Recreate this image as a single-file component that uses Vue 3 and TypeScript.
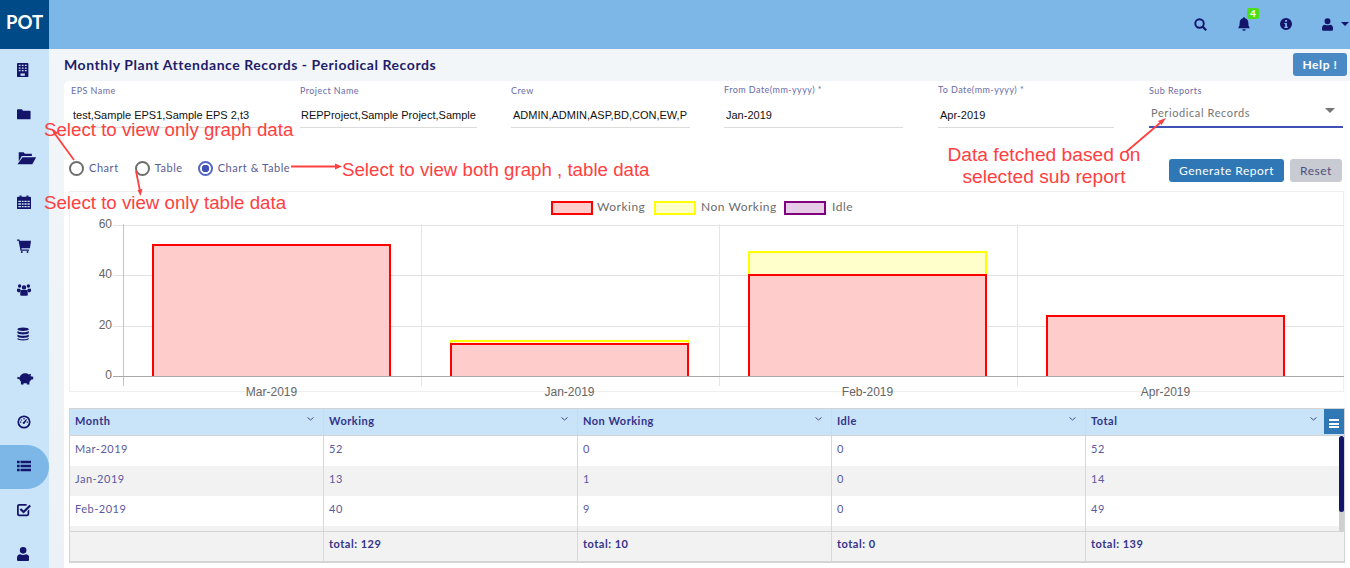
<script setup lang="ts">
interface Row { month: string; working: number; nonWorking: number; idle: number; total: number }

const rows: Row[] = [
  { month: 'Mar-2019', working: 52, nonWorking: 0, idle: 0, total: 52 },
  { month: 'Jan-2019', working: 13, nonWorking: 1, idle: 0, total: 14 },
  { month: 'Feb-2019', working: 40, nonWorking: 9, idle: 0, total: 49 },
]
const chartMonths = [
  { month: 'Mar-2019', working: 52, nonWorking: 0 },
  { month: 'Jan-2019', working: 13, nonWorking: 1 },
  { month: 'Feb-2019', working: 40, nonWorking: 9 },
  { month: 'Apr-2019', working: 24, nonWorking: 0 },
]
const base = 185
const y = (v: number) => Math.ceil(base - v * 2.533)
const ticks = [60, 40, 20, 0]
const verticals = [54, 352, 650, 948]
const barX = (i: number) => 84 + 298 * i
const barPath = (i: number, top: number, bottom: number) => {
  const l = barX(i)
  return `M${l} ${bottom}V${top}H${l + 237}V${bottom}`
}
const columns = ['Month', 'Working', 'Non Working', 'Idle', 'Total']
const totals = ['', 'total: 129', 'total: 10', 'total: 0', 'total: 139']

const fields = [
  { label: 'EPS Name', value: 'test,Sample EPS1,Sample EPS 2,t3', cls: 'f-eps' },
  { label: 'Project Name', value: 'REPProject,Sample Project,Sample', cls: 'f-project' },
  { label: 'Crew', value: 'ADMIN,ADMIN,ASP,BD,CON,EW,P', cls: 'f-crew' },
  { label: 'From Date(mm-yyyy) *', value: 'Jan-2019', cls: 'f-from raised' },
  { label: 'To Date(mm-yyyy) *', value: 'Apr-2019', cls: 'f-to raised' },
]

const navIcons: { d: string; w: number }[] = [
  { w: 14, d: 'M1 0h11a1 1 0 0 1 1 1v14a1 1 0 0 1-1 1H1a1 1 0 0 1-1-1V1a1 1 0 0 1 1-1zM2 2v1.500h2V2zM5.500 2v1.500h2V2zM9 2v1.500h2V2zM2 5v1.500h2V5zM5.500 5v1.500h2V5zM9 5v1.500h2V5zM2 8v1.500h2V8zM5.500 8v1.500h2V8zM9 8v1.500h2V8zM4 12v2.500h5V12z' },
  { w: 16, d: 'M0 3.500a1 1 0 0 1 1-1h4.500l1.500 1.800h7.500a1 1 0 0 1 1 1V13a1 1 0 0 1-1 1H1a1 1 0 0 1-1-1z' },
  { w: 22, d: 'M2 1.500h5.500L9 3h8v2.800H5.500L2 12zM6.300 7H22l-4.500 8H.5z' },
  { w: 16, d: 'M1 2h2V.5h2.200V2h5.600V.5H13V2h2a1 1 0 0 1 1 1v12a1 1 0 0 1-1 1H1a1 1 0 0 1-1-1V3a1 1 0 0 1 1-1zM1.500 6.500V8h3V6.500zM5.500 6.500V8h2V6.500zM8.500 6.500V8h2.500V6.500zM12 6.500V8h2.500V6.500zM1.500 9.500V11h3V9.500zM5.500 9.500V11h2V9.500zM8.500 9.500V11h2.500V9.500zM12 9.500V11h2.500V9.500zM1.500 12.500V14h3v-1.500zM5.500 12.500V14h2v-1.500zM8.500 12.500V14h2.500v-1.500zM12 12.500V14h2.500v-1.500z' },
  { w: 16, d: 'M0 .500h2.800L3.200 2H16l-1.200 8.500H5l.3 1.500h8.500v1.500H4L1.800 2H0zM5.500 13.800a1.100 1.100 0 1 1 0 2.200 1.100 1.100 0 0 1 0-2.200zM12 13.800a1.100 1.100 0 1 1 0 2.200 1.100 1.100 0 0 1 0-2.200z' },
  { w: 16, d: 'M3 1.500a2 2 0 1 1 0 4 2 2 0 0 1 0-4zM13 1.500a2 2 0 1 1 0 4 2 2 0 0 1 0-4zM8 2.500a2.500 2.500 0 1 1 0 5 2.500 2.500 0 0 1 0-5zM0 6.500h3.800l.4 4H1.200L0 9.500zM16 6.500h-3.800l-.4 4h3L16 9.500zM5.200 8h5.600A1.500 1.500 0 0 1 12.300 9.500v4a1 1 0 0 1-1 1H4.700a1 1 0 0 1-1-1v-4A1.500 1.500 0 0 1 5.200 8z' },
  { w: 14, d: 'M7 .500c3.500 0 6.500.9 6.500 2S10.500 4.500 7 4.500.5 3.600.5 2.500 3.500.5 7 .5zM.5 4.500c1 1 4 1.500 6.500 1.500s5.500-.5 6.500-1.500v2C13.500 7.600 10.500 8.500 7 8.500S.5 7.600.5 6.500zM.5 8.500c1 1 4 1.500 6.500 1.500s5.500-.5 6.500-1.500v2c0 1.100-3 2-6.500 2s-6.500-.9-6.500-2zM.5 12.500c1 1 4 1.500 6.500 1.500s5.500-.5 6.500-1.500v1c0 1.100-3 2-6.500 2s-6.500-.9-6.500-2z' },
  { w: 19, d: 'M9 2.500c2 0 3.500.6 4.500 1.500L16 3l-.5 3 3 .5v3l-2.500.5c-.4 1-1 1.700-1.800 2.300V15.500h-3V14H7.500v1.500h-3v-3.500C3.500 11.400 3 10.500 2.800 9.500L0 8.500l.8-2 2.200.8C3.700 4.500 6 2.500 9 2.500z' },
  { w: 16, d: 'M8 .5a7.500 7.500 0 1 1 0 15A7.500 7.500 0 0 1 8 .5zm0 2a5.500 5.500 0 1 0 0 11A5.500 5.500 0 0 0 8 2.500zM7.300 3.500h1.400V5H7.300zM3.500 7.500H5v1.300H3.500zM11 7.500h1.500v1.300H11zM10.500 4.700l.9.800-2.300 3.500a1.300 1.300 0 1 1-1.500-1.300zM4.800 4.800l1.200 1-.9.900-1.100-1z' },
  { w: 16, d: 'M0 2h3v2.800H0zM4 2h12v2.800H4zM0 6.600h3v2.800H0zM4 6.600h12v2.800H4zM0 11.200h3V14H0zM4 11.200h12V14H4z' },
  { w: 16, d: 'M2.500 1H11v2H2.700c-.5 0-.7.300-.7.700v8.600c0 .4.200.7.700.7h8.600c.4 0 .7-.3.700-.7V9l2-2v5.500c0 1.400-1.100 2.500-2.500 2.500h-9A2.500 2.500 0 0 1 0 12.500v-9A2.500 2.500 0 0 1 2.500 1zM14.200 2l1.800 1.700L7.500 12 3 7.600l1.800-1.700 2.700 2.600z' },
  { w: 14, d: 'M7 0a3.800 3.800 0 1 1 0 7.600A3.800 3.800 0 0 1 7 0zM3.800 8.200c.9.500 2 .8 3.200.8s2.300-.3 3.200-.8C12.500 8.300 14 10 14 12.300V14.500a1.500 1.500 0 0 1-1.500 1.500h-11A1.500 1.500 0 0 1 0 14.500v-2.200C0 10 1.500 8.300 3.800 8.200z' },
]
</script>

<template>
  <div class="app">
    <header class="topbar">
      <div class="logo">POT</div>
      <div class="top-icons">
        <svg class="ti i-search" width="13" height="13" viewBox="0 0 16 16"><circle cx="6.800" cy="6.800" r="5.200" fill="none" stroke="#14146b" stroke-width="2.400" /><path d="M10.500 10.500 15 15" stroke="#14146b" stroke-width="2.800" /></svg>
        <span class="bell">
          <svg width="12" height="14" viewBox="0 0 14 16"><path fill="#14146b" d="M7 0a1.200 1.200 0 0 1 1.200 1.300C10.500 1.800 12 3.700 12 6c0 4 .8 5.500 2 7H0c1.200-1.500 2-3 2-7 0-2.300 1.500-4.200 3.800-4.700A1.200 1.200 0 0 1 7 0zM5 14h4a2 2 0 0 1-4 0z" /></svg>
          <span class="badge">4</span>
        </span>
        <svg class="ti i-info" width="12" height="12" viewBox="0 0 16 16"><path fill="#14146b" fill-rule="evenodd" d="M8 0a8 8 0 1 1 0 16A8 8 0 0 1 8 0zM6.800 2.500v2.600h2.600V2.500zM5.800 6.500v1.600h1.100v3.400H5.800v1.700h4.600v-1.700H9.300V6.500z" /></svg>
        <span class="usr">
          <svg width="11" height="13" viewBox="0 0 14 16"><path fill="#14146b" d="M7 0a3.800 3.800 0 1 1 0 7.600A3.800 3.800 0 0 1 7 0zM3.800 8.200c.9.500 2 .8 3.200.8s2.300-.3 3.200-.8C12.500 8.300 14 10 14 12.300V14.500a1.500 1.500 0 0 1-1.500 1.500h-11A1.500 1.500 0 0 1 0 14.500v-2.200C0 10 1.500 8.300 3.800 8.200z" /></svg>
          <i class="caret"></i>
        </span>
      </div>
    </header>

    <div class="body">
      <nav class="sidebar">
        <div v-for="(ic, i) in navIcons" :key="i" class="nav-item" :class="{ active: i === 9 }">
          <svg :width="ic.w * 0.875" height="14" :viewBox="`0 0 ${ic.w} 16`"><path fill="#14146b" fill-rule="evenodd" :d="ic.d" /></svg>
        </div>
      </nav>

      <main class="content">
        <div class="title-row">
          <h1>Monthly Plant Attendance Records - Periodical Records</h1>
          <button class="help">Help !</button>
        </div>

        <section class="panel">
          <div class="fields">
            <div v-for="f in fields" :key="f.label" class="field" :class="f.cls">
              <label>{{ f.label }}</label>
              <div class="value">{{ f.value }}</div>
            </div>
            <div class="field f-sub">
              <label>Sub Reports</label>
              <div class="select">Periodical Records<i class="sel-caret"></i></div>
            </div>
          </div>

          <div class="controls">
            <div class="radios">
              <span class="radio"><i class="dot"></i>Chart</span>
              <span class="radio r-table"><i class="dot"></i>Table</span>
              <span class="radio on"><i class="dot"></i>Chart &amp; Table</span>
            </div>
            <div class="buttons">
              <button class="generate">Generate Report</button>
              <button class="reset">Reset</button>
            </div>
          </div>

          <div class="chart">
            <svg width="1275" height="210" viewBox="0 0 1275 210">
              <g class="legend">
                <rect x="483" y="11" width="40" height="12" fill="#ffcccc" stroke="#ff0000" stroke-width="2" />
                <text x="528" y="20">Working</text>
                <rect x="586" y="11" width="40" height="12" fill="#ffffcc" stroke="#ffff00" stroke-width="2" />
                <text x="632" y="20">Non Working</text>
                <rect x="716" y="11" width="40" height="12" fill="#e6cce6" stroke="#800080" stroke-width="2" />
                <text x="763" y="20">Idle</text>
              </g>
              <g v-for="t in ticks" :key="t">
                <line x1="44" x2="1275" :y1="y(t) + 0.5" :y2="y(t) + 0.5" stroke="#e2e2e2" />
                <text class="axis" x="43" :y="y(t) + 3" text-anchor="end">{{ t }}</text>
              </g>
              <line v-for="v in verticals" :key="v" :x1="v + 0.5" :x2="v + 0.5" y1="33" y2="195" stroke="#e6e6e6" />
              <line x1="54.500" x2="54.500" y1="33" y2="195" stroke="#c4c4c4" />
              <g v-for="(m, i) in chartMonths" :key="m.month">
                <g v-if="m.nonWorking">
                  <rect :x="barX(i)" :y="y(m.working + m.nonWorking)" width="237" :height="y(m.working) - y(m.working + m.nonWorking)" fill="#ffffcc" />
                  <path :d="barPath(i, y(m.working + m.nonWorking), y(m.working))" fill="none" stroke="#ffff00" stroke-width="2" />
                </g>
                <rect :x="barX(i)" :y="y(m.working)" width="237" :height="base - y(m.working)" fill="#ffcccc" />
                <path :d="barPath(i, y(m.working), base)" fill="none" stroke="#ff0000" stroke-width="2" />
                <text class="axis" :x="barX(i) + 118.500" y="205" text-anchor="middle">{{ m.month }}</text>
              </g>
              <line x1="44" x2="1275" :y1="base + 0.5" :y2="base + 0.5" stroke="#a8a8a8" />
            </svg>
          </div>

          <div class="grid-table">
            <div class="tr head">
              <div v-for="c in columns" :key="c" class="td">{{ c }}<svg class="chev" width="7" height="4" viewBox="0 0 7 4"><path d="M.5.500l3 2.500 3-2.500" fill="none" stroke="#4a4a8c" /></svg></div>
              <button class="menu" aria-label="Columns"><i></i><i></i><i></i></button>
            </div>
            <div class="tbody">
              <div v-for="r in rows" :key="r.month" class="tr">
                <div class="td">{{ r.month }}</div>
                <div class="td">{{ r.working }}</div>
                <div class="td">{{ r.nonWorking }}</div>
                <div class="td">{{ r.idle }}</div>
                <div class="td">{{ r.total }}</div>
              </div>
              <div class="tr stub"><div class="td"></div><div class="td"></div><div class="td"></div><div class="td"></div><div class="td"></div></div>
              <div class="scroll"><span></span></div>
            </div>
            <div class="tr foot">
              <div v-for="(t, i) in totals" :key="i" class="td">{{ t }}</div>
            </div>
          </div>
        </section>
      </main>
    </div>

    <div class="notes">
      <span class="note n1">Select to view only graph data</span>
      <span class="note n2">Select to view only table data</span>
      <span class="note n3">Select to view both graph , table data</span>
      <span class="note n4">Data fetched based on<br />selected sub report</span>
      <svg class="arrows" width="1350" height="568" viewBox="0 0 1350 568">
        <g stroke="#ff4040" stroke-width="1.800" fill="none">
          <path d="M74 160 55 134" />
          <path d="M136 171 140 191" />
          <path d="M291 166.500H335" />
          <path d="M1126 152 1160 123" />
        </g>
        <g fill="#ff4040">
          <path d="M52 130l6.500 2.500-4 3z" />
          <path d="M140.500 196l-3-6 5-1z" />
          <path d="M342 166.500l-7-3v6z" />
          <path d="M1166 118l-8 3 3.500 4z" />
        </g>
      </svg>
    </div>
  </div>
</template>

<style>
html, body { margin: 0; overflow: hidden; }
</style>

<style scoped>
.app { position: relative; width: 1350px; height: 568px; overflow: hidden; font-family: Lato, "Liberation Sans", sans-serif; color: #14146b; }
.topbar { display: flex; height: 49px; background: #7cb7e8; }
.logo { width: 49px; background: #004a87; color: #fff; font-size: 18.500px; font-weight: 700; line-height: 45px; text-align: center; }
.top-icons { flex: 1; display: flex; align-items: center; justify-content: flex-end; height: 48px; }
.ti { display: block; }
.i-search { margin-right: 31px; }
.bell { margin-right: 30px; }
.i-info { margin-right: 30px; }
.bell { position: relative; display: block; height: 14px; }
.bell svg, .usr svg { display: block; }
.badge { position: absolute; left: 9px; top: -9px; width: 12px; height: 11px; border-radius: 2px; background: #4bdf1a; color: #fff; font-size: 10px; font-weight: 700; line-height: 11px; text-align: center; }
.usr { display: flex; align-items: center; gap: 8px; margin-right: 1px; }
.caret { width: 0; height: 0; border-left: 4px solid transparent; border-right: 4px solid transparent; border-top: 4px solid #14146b; }
.body { display: flex; height: 519px; }
.sidebar { width: 49px; flex: none; background: #c9e4f9; }
.nav-item { height: 44px; display: flex; align-items: center; padding: 0 0 3px 17px; box-sizing: border-box; }
.nav-item svg { display: block; }
.nav-item.active { background: #7cb7e8; border-radius: 0 22px 22px 0; }
.content { flex: 1; min-width: 0; padding-left: 15px; background: linear-gradient(#f3f6f9, #ebf1f6); }
.title-row { height: 32px; display: flex; align-items: center; justify-content: space-between; padding: 0 3px 0 0; }
h1 { margin: -2px 0 0; font-size: 14px; font-weight: 700; letter-spacing: .55px; color: #1d1d6b; }
.help { width: 54px; height: 23px; padding: 0; margin-top: -1px; border: 0; border-radius: 3px; background: #4a8ac4; color: #fff; font: 700 12px Lato, sans-serif; letter-spacing: .6px; }
.panel { height: 487px; background: #fff; border-top-left-radius: 5px; padding-left: 5px; box-sizing: border-box; }
.fields { display: flex; height: 47px; }
.field { flex: none; box-sizing: border-box; }
.field label { display: block; padding-top: 4px; height: 19px; box-sizing: border-box; font-size: 9px; letter-spacing: .45px; color: #6b6ba8; }
.field.raised label { padding-top: 3px; }
.value { height: 23px; margin-top: 5px; padding: 3px 0 0 2px; box-sizing: border-box; border-bottom: 1px solid #dcdcdc; font: 11px/14px "Liberation Sans", sans-serif; color: #111; white-space: nowrap; overflow: hidden; }
.f-eps { width: 207px; margin-left: 2px; margin-right: 22px; }
.f-project { width: 177px; margin-right: 34px; }
.f-project .value { padding-left: 1px; }
.f-crew { width: 179px; margin-right: 34px; }
.f-from { width: 179px; margin-right: 35px; }
.f-to { width: 176px; margin-right: 35px; }
.f-sub { width: 194px; }
.select { position: relative; height: 23px; margin-top: 5px; padding: 1px 0 0 2px; box-sizing: border-box; border-bottom: 2px solid #3f51b5; font-size: 11px; line-height: 14px; letter-spacing: .6px; color: #757575; }
.sel-caret { position: absolute; right: 8px; top: 3px; border-left: 5px solid transparent; border-right: 5px solid transparent; border-top: 5px solid #757575; }
.controls { height: 63px; display: flex; justify-content: space-between; padding: 31px 8px 0 0; box-sizing: border-box; }
.radios { display: flex; align-items: flex-start; margin-top: -2px; }
.radio { display: flex; align-items: center; height: 20px; font-size: 11px; letter-spacing: .55px; color: #565c96; margin-right: 16px; }
.r-table { margin-right: 15px; }
.dot { width: 15px; height: 15px; box-sizing: border-box; margin-right: 5px; border: 2px solid #6e6e6e; border-radius: 50%; background: #fff; }
.radio .dot { margin-top: 2px; }
.on .dot { border-color: #5566c6; background: radial-gradient(circle, #3f51b5 0 3.500px, #fff 4px); }
.buttons { display: flex; gap: 6px; }
.buttons button { height: 23px; padding: 0; border: 0; border-radius: 3px; font: 12px Lato, sans-serif; letter-spacing: .5px; }
.generate { width: 115px; background: #2f78b5; color: #fff; font-weight: 500; }
.reset { width: 52px; background: #c8cbd1; color: #50507e; }
.chart { width: 1275px; height: 201px; box-sizing: border-box; border: 1px solid #efefef; border-bottom-width: 1px; }
.chart svg { display: block; margin: -1px; }
.legend text { font: 12px Lato, "Liberation Sans", sans-serif; letter-spacing: .5px; fill: #6b6b6b; }
.axis { font: 12px "Liberation Sans", sans-serif; fill: #666; }
.grid-table { width: 1276px; margin-top: 16px; box-sizing: border-box; border: 1px solid #d4d4d4; border-bottom-width: 2px; font-size: 11px; letter-spacing: .5px; color: #5a5aa0; }
.tr { display: grid; grid-template-columns: 254px 254px 254px 254px 1fr; }
.td { position: relative; box-sizing: border-box; padding-left: 5px; border-right: 1px solid #d8d8d8; }
.td:last-child { border-right: 0; }
.head { position: relative; height: 26px; background: #c9e4f9; border-bottom: 1px solid #d4d4d4; font-weight: 700; color: #33338a; }
.head .td { line-height: 23px; }
.chev { position: absolute; right: 9px; top: 8px; }
.head .td:nth-child(5) .chev { right: 26px; }
.menu { position: absolute; right: 0; top: 0; width: 20px; height: 25px; padding: 6px 0 0; border: 0; background: #2f78b5; }
.menu i { display: block; width: 10px; height: 2px; margin: 0 auto 1.500px; background: #fff; }
.tbody { position: relative; }
.tbody .tr { height: 30px; }
.tbody .td { padding-top: 4.500px; line-height: 15px; }
.tbody .tr:nth-child(even) { background: #f2f2f2; }
.tbody .tr.stub { height: 5px; }
.scroll { position: absolute; right: 0; top: 0; width: 5px; height: 96px; border-radius: 3px; background: #cfcfcf; }
.scroll span { display: block; height: 76px; border-radius: 3px; background: #14146b; }
.foot { height: 29px; background: #f2f2f2; border-top: 1px solid #d4d4d4; font-weight: 700; color: #33338a; }
.foot .td { line-height: 23px; }
.notes { position: absolute; inset: 0; pointer-events: none; font: 18.700px/22px "Liberation Sans", sans-serif; color: #ff4040; }
.arrows { position: absolute; left: 0; top: 0; }
.note { position: absolute; white-space: nowrap; }
.n1 { left: 44px; top: 119px; }
.n2 { left: 44px; top: 192px; }
.n3 { left: 342px; top: 159px; }
.n4 { left: 944px; top: 144px; width: 200px; text-align: center; font-size: 19.200px; }
</style>
